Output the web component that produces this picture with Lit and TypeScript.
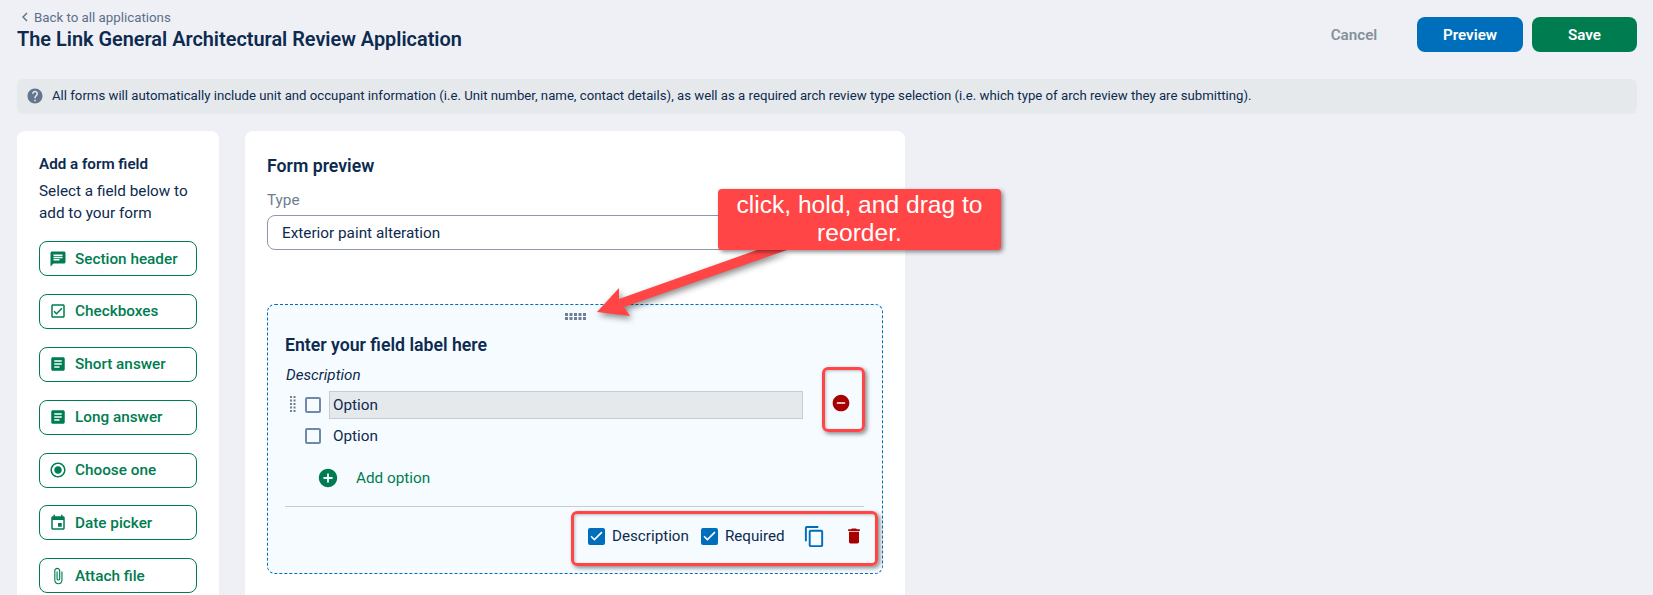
import { LitElement, html, css, svg } from "lit";
import { customElement } from "lit/decorators.js";

const P = {
  chat: "M20 2H4c-1.1 0-1.99.9-1.99 2L2 22l4-4h14c1.1 0 2-.9 2-2V4c0-1.1-.9-2-2-2zM6 9h12v2H6V9zm8 5H6v-2h8v2zm4-6H6V6h12v2z",
  check: "M19 3H5c-1.11 0-2 .9-2 2v14c0 1.1.89 2 2 2h14c1.11 0 2-.9 2-2V5c0-1.1-.89-2-2-2zm0 16H5V5h14v14zM17.99 9l-1.41-1.42-6.59 6.59-2.58-2.57-1.42 1.41 4 3.99z",
  article: "M19 3H5c-1.1 0-2 .9-2 2v14c0 1.1.9 2 2 2h14c1.1 0 2-.9 2-2V5c0-1.1-.9-2-2-2zm-5 14H7v-2h7v2zm3-4H7v-2h10v2zm0-4H7V7h10v2z",
  radio: "M12 7c-2.76 0-5 2.24-5 5s2.24 5 5 5 5-2.24 5-5-2.24-5-5-5zm0-5C6.48 2 2 6.48 2 12s4.48 10 10 10 10-4.48 10-10S17.52 2 12 2zm0 18c-4.42 0-8-3.58-8-8s3.58-8 8-8 8 3.58 8 8-3.58 8-8 8z",
  event: "M17 12h-5v5h5v-5zM16 1v2H8V1H6v2H5c-1.11 0-1.99.9-1.99 2L3 19c0 1.1.89 2 2 2h14c1.1 0 2-.9 2-2V5c0-1.1-.9-2-2-2h-1V1h-2zm3 18H5V8h14v11z",
  attach: "M16.5 6v11.5c0 2.21-1.79 4-4 4s-4-1.79-4-4V5c0-1.38 1.12-2.5 2.5-2.5s2.5 1.12 2.5 2.5v10.5c0 .55-.45 1-1 1s-1-.45-1-1V6H10v9.5c0 1.38 1.12 2.5 2.5 2.5s2.5-1.12 2.5-2.5V5c0-2.21-1.79-4-4-4S7 2.79 7 5v12.5c0 3.04 2.46 5.5 5.5 5.5s5.5-2.46 5.5-5.5V6h-1.5z",
  copy: "M16 1H4c-1.1 0-2 .9-2 2v14h2V3h12V1zm3 4H8c-1.1 0-2 .9-2 2v14c0 1.1.9 2 2 2h11c1.1 0 2-.9 2-2V7c0-1.1-.9-2-2-2zm0 16H8V7h11v14z",
  trash: "M6 19c0 1.1.9 2 2 2h8c1.1 0 2-.9 2-2V7H6v12zM19 4h-3.5l-1-1h-5l-1 1H5v2h14V4z",
  help: "M12 2C6.48 2 2 6.48 2 12s4.48 10 10 10 10-4.48 10-10S17.52 2 12 2zm1 17h-2v-2h2v2zm2.07-7.75l-.9.92C13.45 12.9 13 13.5 13 15h-2v-.5c0-1.1.45-2.1 1.17-2.83l1.24-1.26c.37-.36.59-.86.59-1.41 0-1.1-.9-2-2-2s-2 .9-2 2H8c0-2.21 1.79-4 4-4s4 1.79 4 4c0 .88-.36 1.68-.93 2.25z",
  plus: "M12 2C6.48 2 2 6.48 2 12s4.48 10 10 10 10-4.48 10-10S17.52 2 12 2zm5 11h-4v4h-2v-4H7v-2h4V7h2v4h4v2z",
  minus: "M12 2C6.48 2 2 6.48 2 12s4.48 10 10 10 10-4.48 10-10S17.52 2 12 2zm5 11H7v-2h10v2z",
  tick: "M9 18 3.5 12.5l1.6-1.6L9 14.8 18.9 5l1.6 1.6z",
};

const icon = (d: string, cls = "") =>
  html`<svg class="icon ${cls}" viewBox="0 0 24 24" aria-hidden="true"><path d=${d}></path></svg>`;

const dots = (cols: number, rows: number, dx: number, dy: number, size = 2) =>
  html`<svg class="dots" width=${cols * dx} height=${rows * dy} viewBox="0 0 ${cols * dx} ${rows * dy}" aria-hidden="true">
    ${Array.from({ length: cols * rows }, (_, i) =>
      svg`<rect x=${(i % cols) * dx} y=${Math.floor(i / cols) * dy} width=${size} height=${size}></rect>`
    )}
  </svg>`;

const FIELDS: [string, string][] = [
  ["Section header", P.chat],
  ["Checkboxes", P.check],
  ["Short answer", P.article],
  ["Long answer", P.article],
  ["Choose one", P.radio],
  ["Date picker", P.event],
  ["Attach file", P.attach],
];

@customElement("app-root")
export class AppRoot extends LitElement {
  static styles = css`
    :host {
      display: block;
      font-family: Roboto, "Noto Sans", sans-serif;
      color: #0d2a4f;
    }
    * { box-sizing: border-box; }
    .page {
      position: relative;
      height: 595px;
      overflow: hidden;
      background: #eff0f5;
      padding: 0 16px 0 17px;
    }
    .icon { display: block; width: 24px; height: 24px; fill: currentColor; flex: none; }
    .dots { display: block; fill: #6f7f94; flex: none; }

    .top { display: flex; justify-content: space-between; height: 79px; }
    .back {
      display: flex; align-items: center; gap: 5px;
      height: 16px; margin-top: 9px; padding-left: 4px;
      font-size: 13.3px; color: #5a6f8a;
    }
    .chev { width: 8px; height: 10px; stroke: #5a6f8a; stroke-width: 1.4; fill: none; }
    h1 { margin: 2px 0 0; font-size: 19.9px; line-height: 26px; font-weight: 600; color: #0d2a4f; }
    .actions { display: flex; align-items: flex-start; padding-top: 17px; }
    .btn {
      height: 35px; border-radius: 8px; display: flex; align-items: center; justify-content: center;
      color: #fff; font-size: 15.2px; font-weight: 600;
    }
    .cancel { color: #85909e; margin-right: 39px; width: 48px; }
    .preview { background: #006fbb; width: 106px; margin-right: 9px; }
    .save { background: #007d50; width: 105px; }

    .info {
      height: 35px; border-radius: 6px; background: #e6e9ec;
      display: flex; align-items: center; gap: 8px; padding-left: 9px; padding-bottom: 2px;
      font-size: 13.2px;
    }
    .info .icon { width: 18px; height: 18px; color: #63758f; }

    .cols { display: flex; gap: 26px; margin-top: 17px; align-items: stretch; }
    .card { background: #fff; border-radius: 8px 8px 0 0; height: 470px; }

    .side { width: 202px; padding: 23px 22px 0; }
    .side h2 { margin: 0; font-size: 15.2px; line-height: 20px; font-weight: 600; }
    .side p { margin: 6px 0 0; font-size: 15.3px; line-height: 22px; }
    .adds { display: flex; flex-direction: column; gap: 17.9px; margin-top: 17px; }
    .add {
      height: 35px; border: 1px solid #007d50; border-radius: 8px;
      display: flex; align-items: center; gap: 8px; padding-left: 9px;
      color: #007d50; font-size: 15.3px; font-weight: 500;
    }
    .add .icon { width: 18px; height: 18px; }

    .main { width: 660px; padding: 23px 22px 0 22px; }
    .main h2 { margin: 0; font-size: 17.7px; line-height: 24px; font-weight: 600; }
    .lbl { margin-top: 11px; font-size: 15.3px; line-height: 22px; color: #6d7d91; }
    .select {
      margin-top: 4px; height: 35px; border: 1px solid #8d99a8; border-radius: 8px;
      display: flex; align-items: center; padding: 1px 0 0 14px; font-size: 15.3px;
    }
    .field {
      margin-top: 54px; height: 270px; width: 616px; border: 1px dashed #006fbb; border-radius: 8px;
      background: #f6fbff; padding: 8px 18px 0 17px;
      display: flex; flex-direction: column;
    }
    .grab { display: flex; justify-content: center; height: 8px; padding-left: 4px; }
    .field h3 { margin: 11px 0 0; font-size: 17.7px; line-height: 26px; font-weight: 600; }
    .desc { margin-top: 8px; font-size: 15.2px; line-height: 18px; font-style: italic; padding-left: 1px; }
    .row { display: flex; align-items: center; height: 28px; }
    .row.first { margin-top: 7px; }
    .row.next { margin-top: 3px; }
    .handle { width: 20px; padding-left: 5px; }
    .box {
      width: 16px; height: 16px; border: 2px solid #7089a8; border-radius: 2px; background: #f6fbff; flex: none;
    }
    .opt { margin-left: 8px; font-size: 15.3px; line-height: 26px; padding-left: 3px; height: 28px; width: 474px; border: 1px solid transparent; }
    .opt.on { background: #e6e9ec; border-color: #c6ccd3; }
    .minus { margin: 2px 0 0 28px; align-self: flex-start; width: 20px; height: 20px; color: #a80000; }
    .addopt { display: flex; align-items: center; margin: 16px 0 0 32px; height: 24px; color: #007d50; font-size: 15.3px; gap: 17px; }
    .addopt .icon { width: 22px; height: 22px; }
    hr { width: 579px; border: 0; border-top: 1px solid #c6ccd3; margin: 16px 0 0; height: 0; }
    .tools { display: flex; align-items: center; height: 24px; margin-top: 17px; padding-left: 303px; font-size: 15.2px; }
    .cb {
      width: 17px; height: 17px; border-radius: 2px; background: #006fbb; color: #fff; flex: none;
      margin-right: 7px; display: flex;
    }
    .cb .icon { width: 17px; height: 17px; }
    .t1 { margin-right: 12px; }
    .t2 { margin-right: 18px; }
    .tools .copy { width: 23px; height: 23px; color: #006fbb; margin-right: 18px; }
    .tools .trash { width: 20px; height: 20px; color: #a80000; }

    .callout {
      position: absolute; left: 718px; top: 189px; width: 283px; height: 61px;
      background: #ff4545; color: #fff; border-radius: 4px; text-align: center;
      font-family: "Liberation Sans", Arial, sans-serif; font-size: 24.6px; line-height: 27.5px;
      padding: 2px 10px 0; box-shadow: 2px 2px 4px rgba(0,0,0,.45);
    }
    .arrow {
      position: absolute; left: 0; top: 0; width: 1653px; height: 595px; pointer-events: none;
      fill: #ff4545; filter: drop-shadow(2px 3px 3px rgba(0,0,0,.45));
    }
    .mark {
      position: absolute; border: 3px solid #ff4545; border-radius: 6px;
      box-shadow: 2px 2px 4px rgba(0,0,0,.45), inset 1px 1px 3px rgba(0,0,0,.25);
    }
    .m1 { left: 822px; top: 367px; width: 43px; height: 65px; }
    .m2 { left: 571px; top: 511px; width: 307px; height: 55px; }
  `;

  render() {
    return html`
      <div class="page">
        <div class="top">
          <div>
            <div class="back">
              <svg class="chev" viewBox="0 0 8 10"><path d="M6 1 2 5l4 4"></path></svg>
              Back to all applications
            </div>
            <h1>The Link General Architectural Review Application</h1>
          </div>
          <div class="actions">
            <div class="btn cancel">Cancel</div>
            <div class="btn preview">Preview</div>
            <div class="btn save">Save</div>
          </div>
        </div>

        <div class="info">
          ${icon(P.help)}
          <span>All forms will automatically include unit and occupant information (i.e. Unit number, name, contact details), as well as a required arch review type selection (i.e. which type of arch review they are submitting).</span>
        </div>

        <div class="cols">
          <div class="card side">
            <h2>Add a form field</h2>
            <p>Select a field below to add to your form</p>
            <div class="adds">
              ${FIELDS.map(([t, d]) => html`<div class="add">${icon(d)}<span>${t}</span></div>`)}
            </div>
          </div>

          <div class="card main">
            <h2>Form preview</h2>
            <div class="lbl">Type</div>
            <div class="select">Exterior paint alteration</div>

            <div class="field">
              <div class="grab">${dots(5, 2, 4.5, 4, 3)}</div>
              <h3>Enter your field label here</h3>
              <div class="desc">Description</div>
              <div class="row first">
                <div class="handle">${dots(2, 5, 3.5, 3.5)}</div>
                <div class="box"></div>
                <div class="opt on">Option</div>
                ${icon(P.minus, "minus")}
              </div>
              <div class="row next">
                <div class="handle"></div>
                <div class="box"></div>
                <div class="opt">Option</div>
              </div>
              <div class="addopt">${icon(P.plus)}<span>Add option</span></div>
              <hr />
              <div class="tools">
                <div class="cb">${icon(P.tick)}</div><span class="t1">Description</span>
                <div class="cb">${icon(P.tick)}</div><span class="t2">Required</span>
                ${icon(P.copy, "copy")}
                ${icon(P.trash, "trash")}
              </div>
            </div>
          </div>
        </div>

        <svg class="arrow" viewBox="0 0 1653 595" aria-hidden="true">
          <polygon points="597,312 619,288 619,299 757,250 787,250 624,307 630,316"></polygon>
        </svg>
        <div class="callout">click, hold, and drag to reorder.</div>
        <div class="mark m1"></div>
        <div class="mark m2"></div>
      </div>
    `;
  }
}
